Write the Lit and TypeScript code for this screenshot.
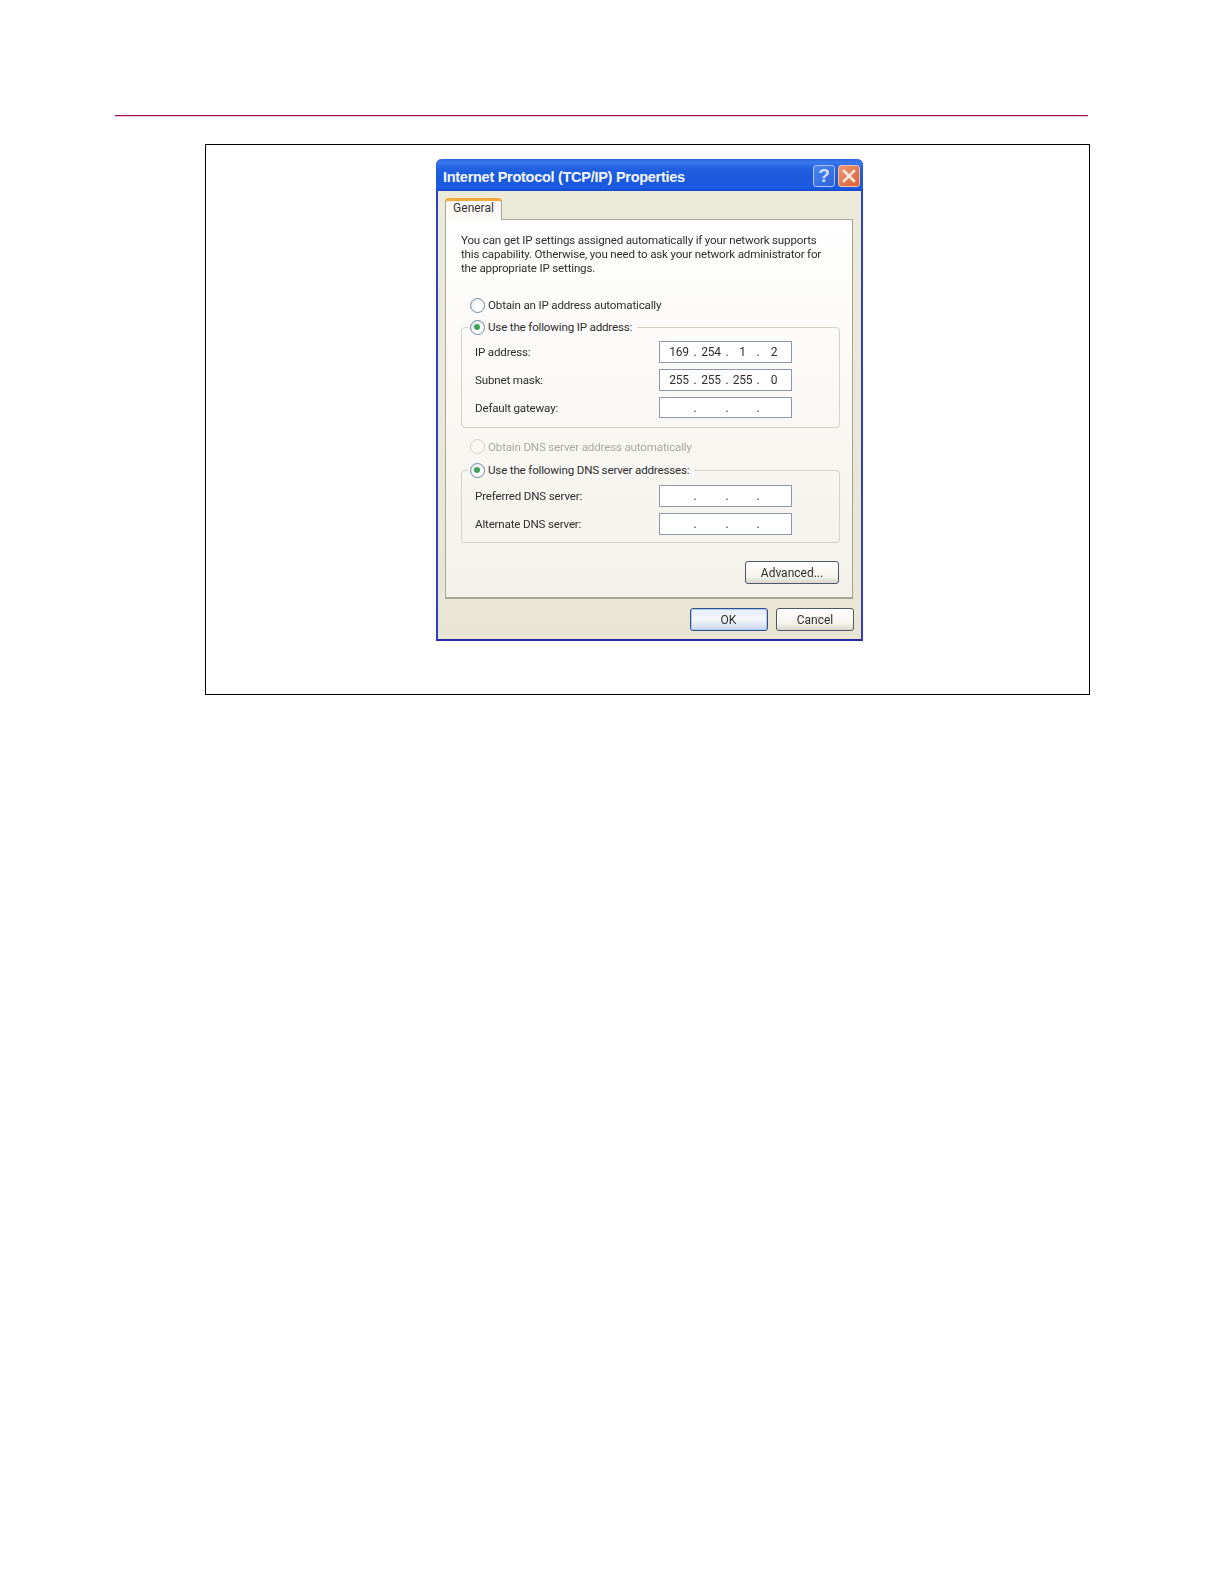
import { LitElement, html, css } from "lit";
import { customElement } from "lit/decorators.js";

const radio = (state: "off" | "on" | "dis") => html`<span class="radio ${state}"></span>`;

const field = (label: string, parts: string[]) => html`
  <div class="row">
    <span class="lbl">${label}</span>
    <div class="ip">
      ${[0, 1, 2, 3].map((i) => html`<span class="oct">${parts[i] ?? ""}</span>${i < 3 ? html`<span class="dot">.</span>` : ""}`)}
    </div>
  </div>`;

@customElement("app-root")
export class AppRoot extends LitElement {
  static styles = css`
    :host { display: block; width: 1224px; height: 1584px; background: #fff; overflow: hidden; font-family: "Liberation Sans", Arial, sans-serif; }
    .page { padding: 115px 0 0 115px; }
    .rule { width: 973px; height: 1px; background: #a8124f; box-shadow: 0 1px 0 rgba(168, 18, 79, 0.25); }
    .frame { box-sizing: border-box; margin: 28px 0 0 90px; width: 885px; height: 551px; border: 1px solid #000; padding: 14px 0 0 230px; }
    .dialog { box-sizing: border-box; width: 427px; height: 482px; background: linear-gradient(#ecead9, #e8e6d3); border: 2px solid #2f3fc4; border-top: 0; border-bottom-color: #2a2aa6; border-radius: 6px 6px 0 0; display: flex; flex-direction: column; filter: blur(0.35px); font-family: Roboto, "Liberation Sans", sans-serif; }
    .title { height: 31px; margin: 0 -2px; border-radius: 6px 6px 0 0; background: linear-gradient(#2c62dc 0, #3a78ee 10%, #2160e0 30%, #1b58dc 70%, #1c5ce4 90%, #1748c8 100%); display: flex; align-items: center; padding: 1px 3px 0 7px; gap: 3px; }
    .title-text { flex: 1; padding-top: 2px; color: #f4f7ff; font-family: "Liberation Sans", sans-serif; font-weight: 700; font-size: 14.5px; letter-spacing: -0.28px; }
    .tbtn { box-sizing: border-box; width: 22px; height: 22px; border: 1px solid #a9c6f4; border-radius: 3px; display: flex; align-items: center; justify-content: center; }
    .help { background: linear-gradient(135deg, #4a86ee, #2f62d8); color: #cfe0fb; font-family: "Liberation Sans", sans-serif; font-weight: 700; font-size: 19px; }
    .close { background: linear-gradient(135deg, #ee9672, #dc6036); border-color: #f2c0a8; }
    .content { flex: 1; padding: 7px 8px 0 7px; display: flex; flex-direction: column; }
    .tab { box-sizing: border-box; align-self: flex-start; width: 57px; height: 22px; margin-bottom: -1px; position: relative; z-index: 1; background: #fbfaf6; border: 1px solid #a8a698; border-bottom: 0; border-top: 3px solid #f0ac38; border-radius: 4px 4px 0 0; font-size: 12px; color: #333; text-align: center; line-height: 15px; }
    .panel { box-sizing: border-box; height: 380px; background: linear-gradient(#fff, #f3f1ea); border: 1px solid #a9a89b; border-right-color: #a2a195; border-bottom: 2px solid #a5a498; padding: 14px 0 0 15px; font-size: 11.6px; letter-spacing: -0.18px; color: #2e2e2e; }
    .intro { margin: 0; line-height: 13.8px; white-space: pre; height: 41px; }
    .opt { display: flex; align-items: center; gap: 3px; height: 16px; padding-left: 9px; white-space: nowrap; }
    .opt.first { margin-top: 22px; }
    .opt.dis { color: #a9a9a2; margin-top: 10.5px; }
    .group { position: relative; box-sizing: border-box; width: 379px; border: 1px solid #d4d3c9; border-radius: 4px; padding-left: 13px; }
    .legend { position: absolute; left: 6px; top: -9px; padding: 0 5px 0 2px; }
    .group1 { height: 101px; margin-top: 14px; padding-top: 13.3px; }
    .group1 .legend { background: #fcfbf9; }
    .group2 { height: 73px; margin-top: 15.5px; padding-top: 14.3px; }
    .group2 .legend { background: #f8f7f3; }
    .row { display: grid; grid-template-columns: 183.5px 133px; align-items: center; height: 21.5px; margin-bottom: 6.3px; }
    .ip { box-sizing: border-box; height: 21.5px; background: #fff; border: 1px solid #8b97ab; border-top-width: 1.5px; display: grid; grid-template-columns: 27px 5px 27px 5px 26px 5px 27px; padding-left: 6px; font-size: 12px; color: #2e2e2e; align-items: center; }
    .oct, .dot { text-align: center; }
    .radio { box-sizing: border-box; flex: none; width: 15px; height: 15px; border-radius: 50%; border: 1.5px solid #6f8a9e; background: radial-gradient(circle at 62% 62%, #fff 35%, #d8dde2); position: relative; }
    .radio.dis { border-color: #d2d1c9; background: #f8f8f4; }
    .radio.on::after { content: ""; position: absolute; left: 3px; top: 3px; width: 6px; height: 6px; border-radius: 50%; background: #3da25a; }
    .adv-row { display: flex; justify-content: flex-end; margin: 18px 0 0 0; width: 378px; }
    .btn { box-sizing: border-box; height: 23px; border: 1.5px solid #4c5868; border-radius: 3px; background: linear-gradient(#fff, #f4f3ec 70%, #d9d7cb); font: inherit; font-size: 12px; letter-spacing: 0; color: #2e2e2e; padding: 0; display: flex; align-items: center; justify-content: center; }
    .adv { width: 94px; }
    .foot { display: flex; justify-content: flex-end; gap: 8.5px; margin: 9px -1px 0 0; }
    .foot .btn { width: 78px; }
    .ok { border-color: #2f4f8c; background: linear-gradient(#e4edfb, #f4f6fa 50%, #c8d6ef); box-shadow: inset 0 0 0 1px #b4c9ec; }
  `;

  render() {
    return html`<div class="page">
      <div class="rule"></div>
      <div class="frame">
        <div class="dialog">
          <div class="title">
            <span class="title-text">Internet Protocol (TCP/IP) Properties</span>
            <span class="tbtn help">?</span>
            <span class="tbtn close">
              <svg width="14" height="14" viewBox="0 0 14 14"><path d="M2 2 L12 12 M12 2 L2 12" stroke="#fbeadf" stroke-width="2.6" stroke-linecap="square" /></svg>
            </span>
          </div>
          <div class="content">
            <div class="tab">General</div>
            <div class="panel">
              <p class="intro">You can get IP settings assigned automatically if your network supports
this capability. Otherwise, you need to ask your network administrator for
the appropriate IP settings.</p>
              <div class="opt first">${radio("off")}<span>Obtain an IP address automatically</span></div>
              <div class="group group1">
                <div class="opt legend">${radio("on")}<span>Use the following IP address:</span></div>
                ${field("IP address:", ["169", "254", "1", "2"])}
                ${field("Subnet mask:", ["255", "255", "255", "0"])}
                ${field("Default gateway:", [])}
              </div>
              <div class="opt dis">${radio("dis")}<span>Obtain DNS server address automatically</span></div>
              <div class="group group2">
                <div class="opt legend">${radio("on")}<span>Use the following DNS server addresses:</span></div>
                ${field("Preferred DNS server:", [])}
                ${field("Alternate DNS server:", [])}
              </div>
              <div class="adv-row"><button class="btn adv">Advanced...</button></div>
            </div>
            <div class="foot">
              <button class="btn ok">OK</button>
              <button class="btn">Cancel</button>
            </div>
          </div>
        </div>
      </div>
    </div>`;
  }
}
